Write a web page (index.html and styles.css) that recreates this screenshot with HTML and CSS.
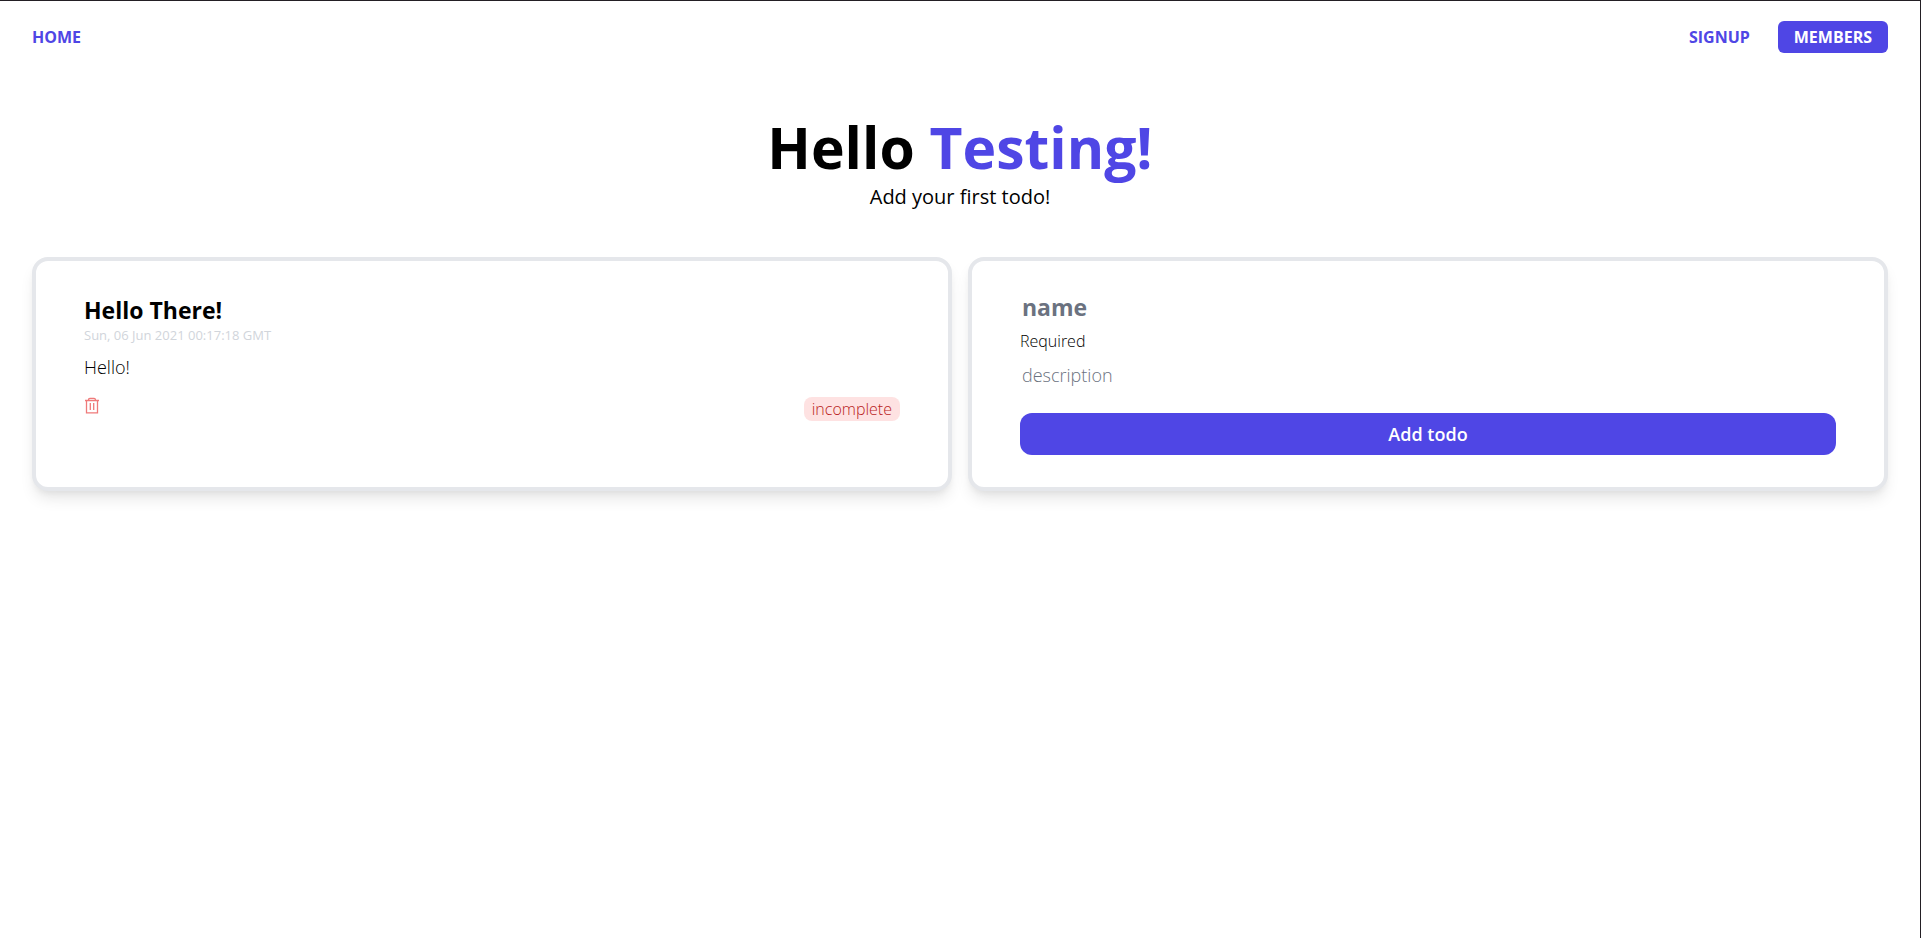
FILE: index.html
```html
<!DOCTYPE html>
<html lang="en">
<head>
<meta charset="utf-8">
<meta name="viewport" content="width=device-width, initial-scale=1">
<title>Todos</title>
<link rel="stylesheet" href="styles.css">
</head>
<body>
<nav class="nav">
  <a class="nav-link" href="#home">HOME</a>
  <div class="nav-actions">
    <a class="nav-link" href="#signup">SIGNUP</a>
    <a class="nav-button" href="#members">MEMBERS</a>
  </div>
</nav>
<header class="hero">
  <h1 class="hero-title">Hello <span class="accent">Testing!</span></h1>
  <p class="hero-subtitle">Add your first todo!</p>
</header>
<main class="cards">
  <article class="card">
    <h2 class="todo-title">Hello There!</h2>
    <time class="todo-date">Sun, 06 Jun 2021 00:17:18 GMT</time>
    <p class="todo-text">Hello!</p>
    <div class="todo-footer">
      <button class="delete" type="button" aria-label="Delete todo">
        <svg width="16" height="17" viewBox="0 0 16 17" fill="none" stroke="currentColor" stroke-width="1.3" aria-hidden="true">
          <path d="M1 3.5H15M2.5 3.5V15.8H13.5V3.5M4.6 3.2V2.6Q4.6 1.3 5.9 1.3H10.1Q11.4 1.3 11.4 2.6V3.2M6.3 6V13M9.7 6V13"/>
        </svg>
      </button>
      <button class="status" type="button">incomplete</button>
    </div>
  </article>
  <form class="card todo-form">
    <input class="field field-name" type="text" placeholder="name" aria-label="name" aria-describedby="name-error">
    <p class="field-error" id="name-error">Required</p>
    <input class="field field-description" type="text" placeholder="description" aria-label="description">
    <button class="submit" type="submit">Add todo</button>
  </form>
</main>
</body>
</html>
```
FILE: styles.css
```css
* {
  box-sizing: border-box;
  margin: 0;
}

body {
  min-height: 100vh;
  border-top: 1px solid #231f24;
  border-right: 1px solid #231f24;
  background: #fff;
  color: #000;
  font-family: "Open Sans", "Noto Sans", sans-serif;
}

button,
input {
  border: 0;
  background: none;
  font-family: inherit;
}

.nav {
  display: flex;
  align-items: center;
  justify-content: space-between;
  padding: 20px 32px;
}

.nav-actions {
  display: flex;
  align-items: center;
  gap: 28px;
}

.nav-link,
.nav-button {
  font-size: 16px;
  font-weight: 700;
  line-height: 24px;
  text-decoration: none;
}

.nav-link {
  color: #4f46e5;
}

.nav-button {
  padding: 4px 16px;
  border-radius: 6px;
  background: #4f46e5;
  color: #fff;
}

.hero {
  padding: 42px 32px 0;
  text-align: center;
}

.hero-title {
  margin-bottom: 4px;
  font-size: 57px;
  font-weight: 700;
  line-height: 64px;
}

.accent {
  color: #4f46e5;
}

.hero-subtitle {
  font-size: 20px;
  font-weight: 500;
  line-height: 28px;
}

.cards {
  display: grid;
  grid-template-columns: 1fr 1fr;
  gap: 16px;
  padding: 46px 32px;
}

.card {
  padding: 32px 48px;
  border: 4px solid #e5e7eb;
  border-radius: 16px;
  background: #fff;
  box-shadow: 0 10px 15px -3px rgb(0 0 0 / 10%), 0 4px 6px -2px rgb(0 0 0 / 5%);
}

.todo-title {
  font-size: 23px;
  font-weight: 700;
  line-height: 34px;
}

.todo-date {
  display: block;
  color: #d1d5db;
  font-size: 13px;
  line-height: 16px;
}

.todo-text {
  padding: 10px 0 8px;
  font-size: 18px;
  font-weight: 300;
  line-height: 28px;
}

.todo-footer {
  display: flex;
  align-items: flex-start;
  justify-content: space-between;
  padding-top: 8px;
}

.delete {
  display: flex;
  padding: 0;
  color: #ef7a7a;
}

.status {
  padding: 0 8px;
  border-radius: 8px;
  background: #fee2e2;
  color: #b91c1c;
  font-size: 16px;
  font-weight: 300;
  line-height: 24px;
}

.todo-form {
  display: flex;
  flex-direction: column;
}

.field {
  width: 100%;
  padding: 0 2px;
}

.field::placeholder {
  color: #6b7280;
}

.field-name {
  height: 28px;
  font-size: 23px;
  font-weight: 700;
}

.field-error {
  padding: 8px 0 4px;
  font-size: 16px;
  font-weight: 300;
  line-height: 24px;
}

.field-description {
  height: 36px;
  font-size: 18px;
  font-weight: 300;
}

.submit {
  margin-top: 20px;
  border-radius: 12px;
  background: #4f46e5;
  color: #fff;
  font-size: 18px;
  font-weight: 600;
  line-height: 40px;
}
```
